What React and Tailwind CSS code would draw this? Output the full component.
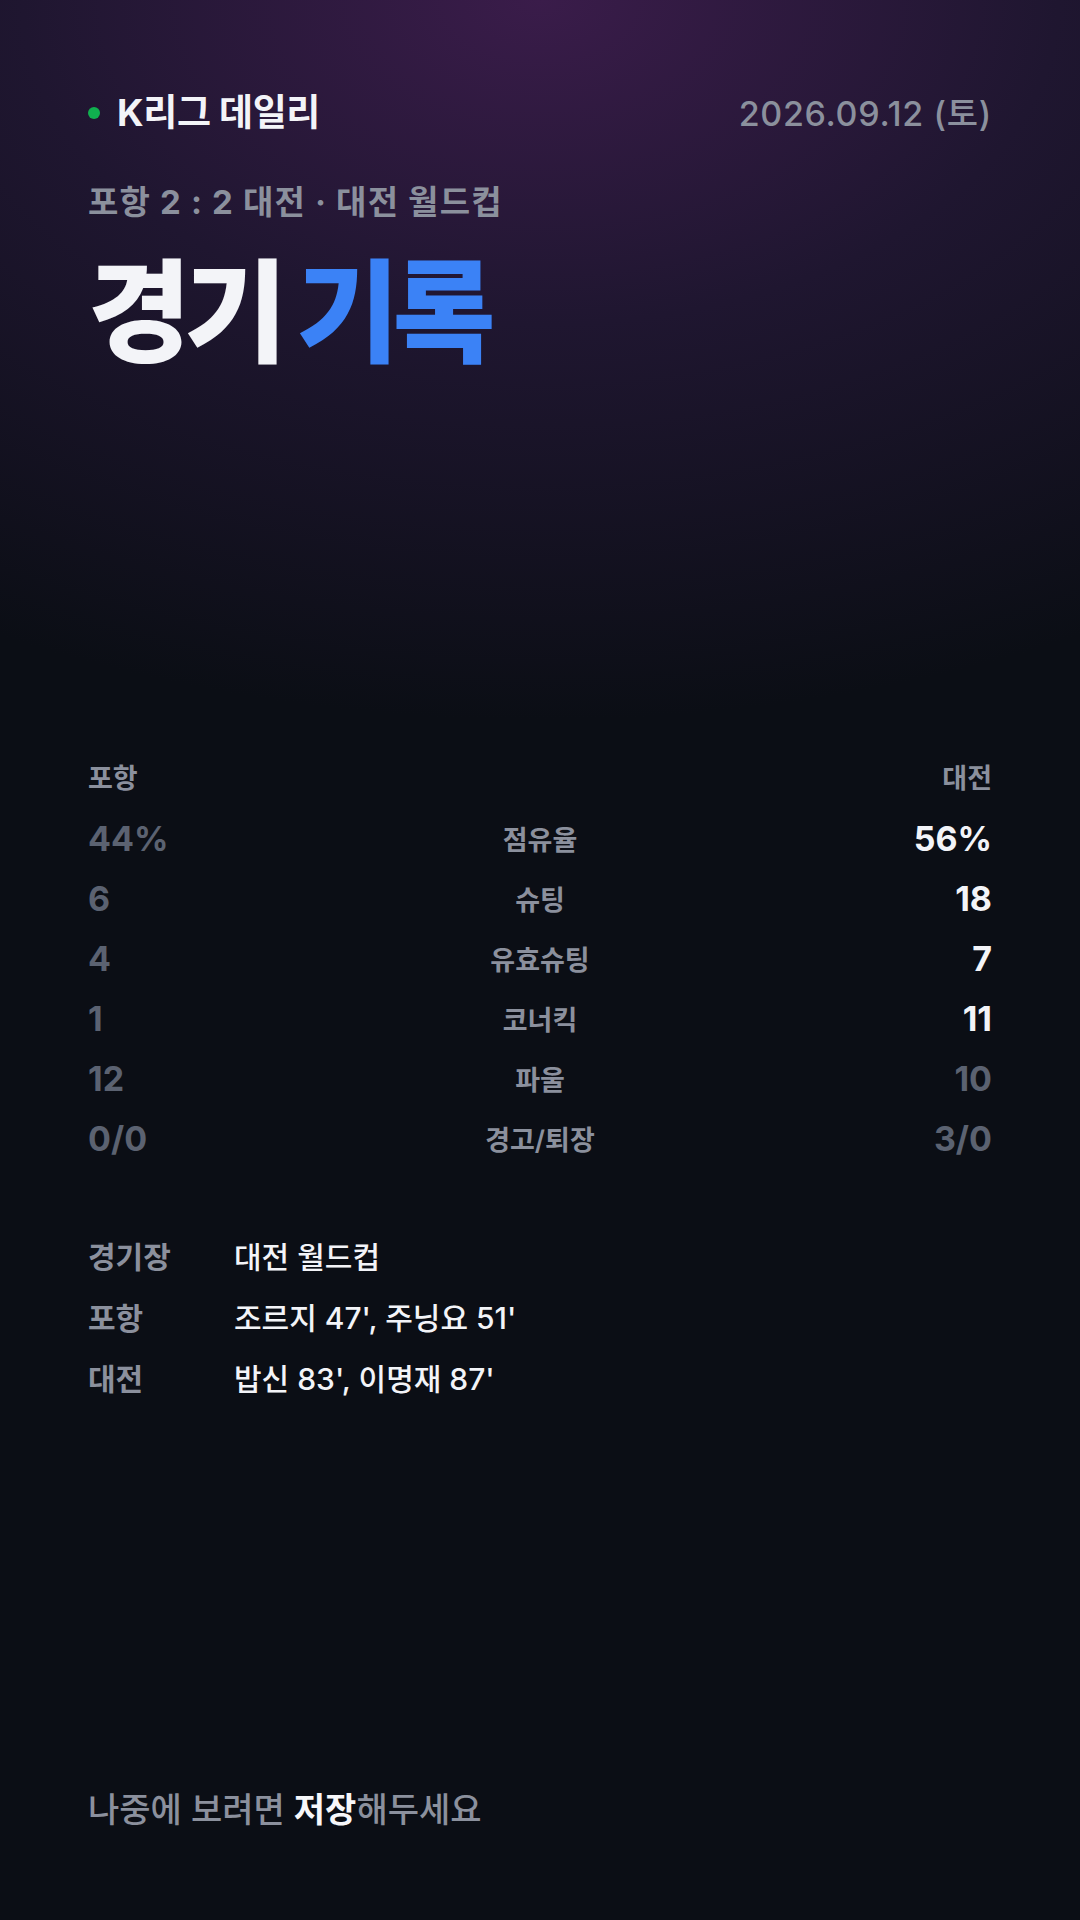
export default function App() {
  const stats = [
    { left: '44%', label: '점유율', right: '56%', win: 'right' },
    { left: '6', label: '슈팅', right: '18', win: 'right' },
    { left: '4', label: '유효슈팅', right: '7', win: 'right' },
    { left: '1', label: '코너킥', right: '11', win: 'right' },
    { left: '12', label: '파울', right: '10', win: null },
    { left: '0/0', label: '경고/퇴장', right: '3/0', win: null },
  ];

  const info = [
    { label: '경기장', value: '대전 월드컵' },
    { label: '포항', value: "조르지 47', 주닝요 51'" },
    { label: '대전', value: "밥신 83', 이명재 87'" },
  ];

  return (
    <main
      className="w-[1080px] h-[1920px] overflow-hidden bg-[#0b0e15] bg-[radial-gradient(ellipse_1150px_720px_at_50%_0%,#3a1c4a_0%,#1f1630_45%,#0b0e15_100%)] font-['Inter','Noto_Sans_CJK_KR',sans-serif]"
    >
      <div className="px-[88px] pt-[93px]">
        {/* header */}
        <div className="flex items-center justify-between h-[40px]">
          <div className="flex items-center gap-[17px]">
            <span className="w-[12px] h-[12px] rounded-full bg-[#10b04f]" />
            <span className="text-[37px] font-bold text-[#f3f4f8] tracking-[-0.01em]">K리그 데일리</span>
          </div>
          <span className="text-[34px] font-medium tracking-[0.02em] text-[#8b909d]">2026.09.12 (토)</span>
        </div>

        <p className="mt-[49px] h-[40px] leading-[40px] text-[33px] font-bold tracking-[0.035em] text-[#8b909d]">
          포항 2 : 2 대전 · 대전 월드컵
        </p>

        <h1 className="mt-[37px] h-[108px] leading-[108px] text-[112px] font-black tracking-[-0.06em]">
          <span className="text-[#f3f4f8]">경기</span>{' '}
          <span className="text-[#3b82f6]">기록</span>
        </h1>

        {/* stats */}
        <div className="mt-[394px]">
          <div className="flex justify-between h-[36px] mb-[11px] items-center text-[27px] font-bold text-[#8b909d]">
            <span>포항</span>
            <span>대전</span>
          </div>
          {stats.map((s) => (
            <div key={s.label} className="grid grid-cols-3 items-center h-[60px]">
              <span className="text-[34px] font-bold text-[#5b6271]">{s.left}</span>
              <span className="pt-[6px] text-center text-[27px] font-semibold text-[#8b909d]">{s.label}</span>
              <span
                className={
                  s.win === 'right'
                    ? 'text-right text-[34px] font-bold text-[#f3f4f8]'
                    : 'text-right text-[34px] font-bold text-[#5b6271]'
                }
              >
                {s.right}
              </span>
            </div>
          ))}
        </div>

        {/* info */}
        <div className="mt-[59px]">
          {info.map((r) => (
            <div key={r.label} className="flex items-center h-[61px]">
              <span className="w-[146px] text-[30px] font-bold text-[#8b909d]">{r.label}</span>
              <span className="text-[30px] font-medium text-[#f3f4f8]">{r.value}</span>
            </div>
          ))}
        </div>

        <p className="mt-[380px] h-[40px] leading-[40px] text-[34px] font-medium text-[#8b909d]">
          나중에 보려면 <span className="font-bold text-[#f7f7fa]">저장</span>해두세요
        </p>
      </div>
    </main>
  );
}
